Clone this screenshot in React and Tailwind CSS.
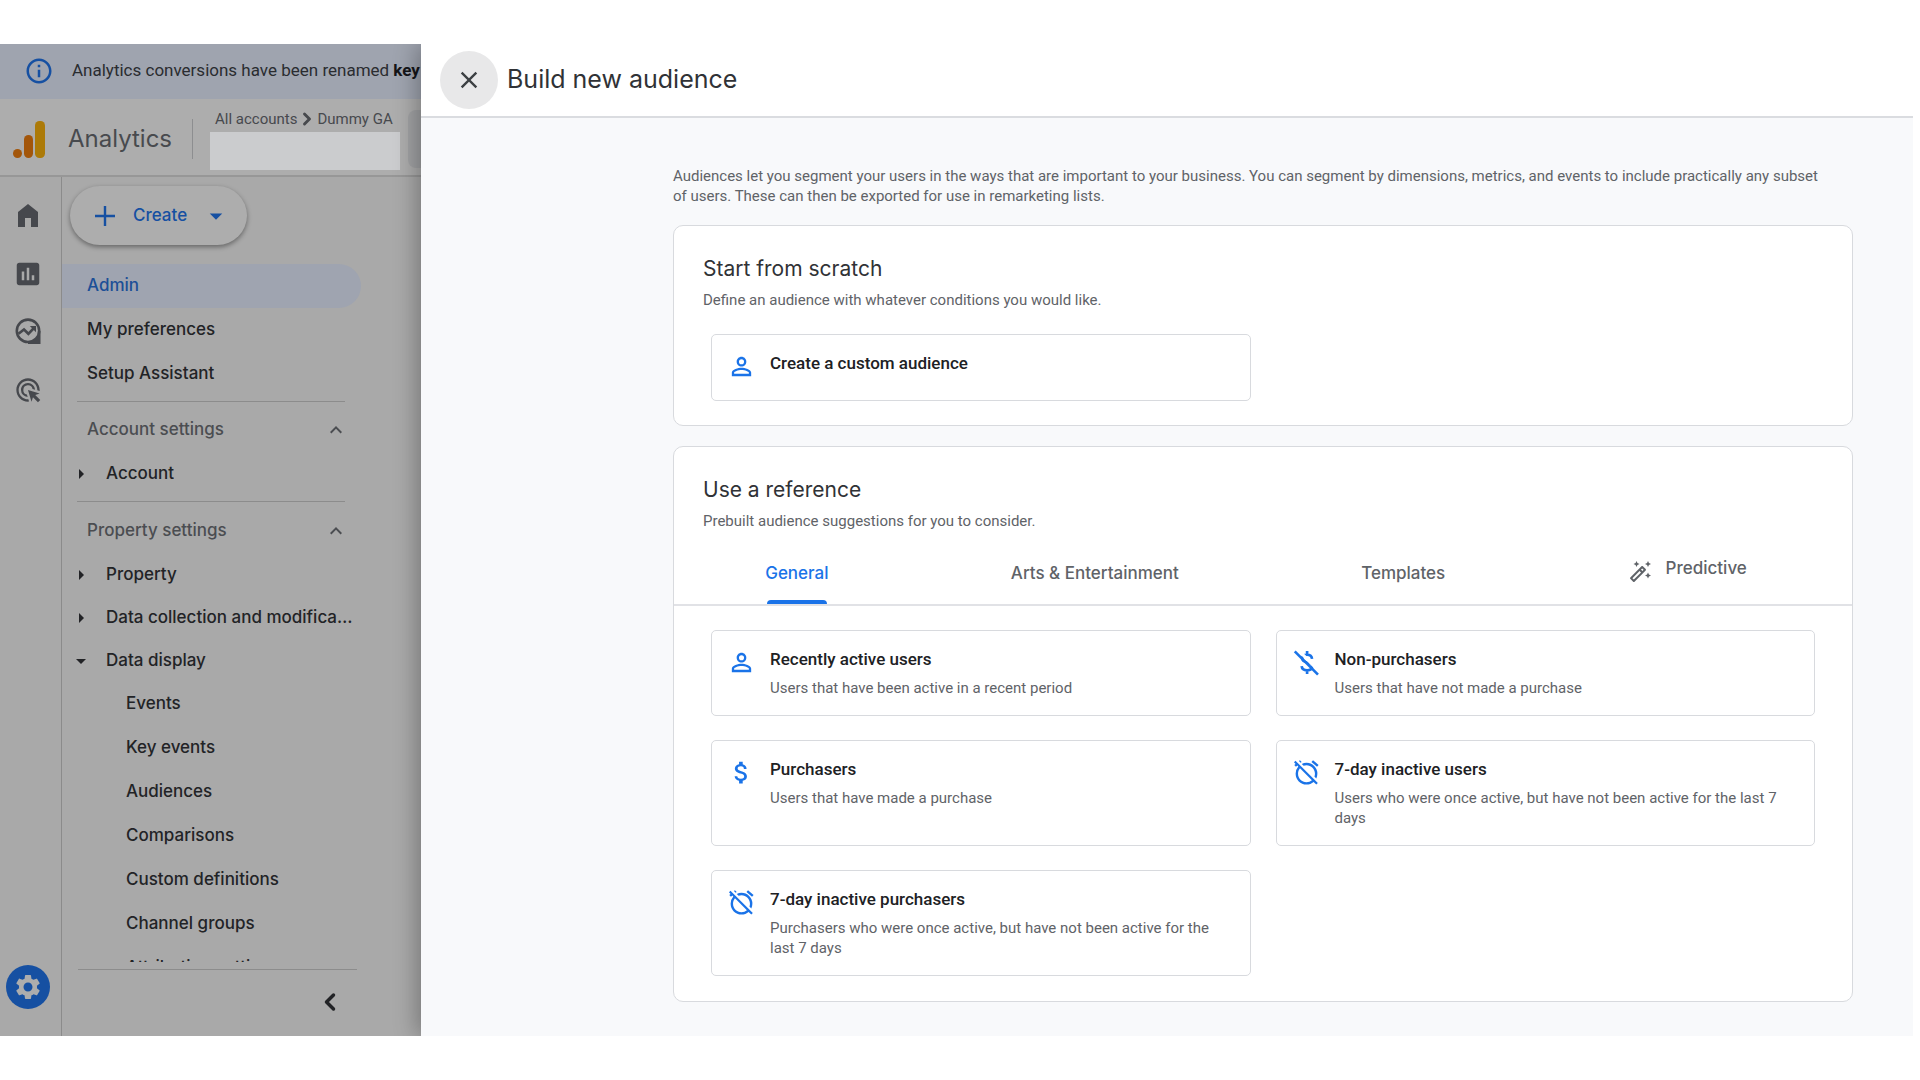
import React from 'react';
import { ChevronLeft, ChevronRight } from 'lucide-react';
import {
  MdAdsClick,
  MdAlarmOff,
  MdArrowDropDown,
  MdArrowRight,
  MdAttachMoney,
  MdClose,
  MdExpandLess,
  MdInfoOutline,
  MdOutlineAutoFixHigh,
  MdPersonOutline,
  MdPoll,
  MdSettings
} from 'react-icons/md';

const dataDisplayItems = [
  'Events',
  'Key events',
  'Audiences',
  'Comparisons',
  'Custom definitions',
  'Channel groups',
  'Attribution settings'
];

const tabs = [
  { label: 'General', active: true },
  { label: 'Arts & Entertainment' },
  { label: 'Templates' }
];

const references = [
  {
    title: 'Recently active users',
    text: 'Users that have been active in a recent period',
    icon: MdPersonOutline
  },
  { title: 'Non-purchasers', text: 'Users that have not made a purchase', icon: MoneyOffIcon },
  { title: 'Purchasers', text: 'Users that have made a purchase', icon: MdAttachMoney },
  {
    title: '7-day inactive users',
    text: 'Users who were once active, but have not been active for the last 7 days',
    icon: MdAlarmOff
  },
  {
    title: '7-day inactive purchasers',
    text: 'Purchasers who were once active, but have not been active for the last 7 days',
    icon: MdAlarmOff
  }
];

function AnalyticsLogo() {
  return (
    <svg aria-hidden="true" viewBox="0 0 32 37" className="h-[37px] w-8 shrink-0">
      <rect x="22" y="0" width="10" height="37" rx="4.5" fill="#ac7a08" />
      <rect x="11" y="14" width="9" height="23" rx="4.5" fill="#a3560a" />
      <circle cx="4.5" cy="32.5" r="4.5" fill="#a3560a" />
    </svg>
  );
}

function HomeIcon() {
  return (
    <svg aria-hidden="true" viewBox="0 0 20 23" fill="currentColor" className="h-[23px] w-5">
      <path d="M0 23V8L10 0l10 8v15h-7v-9H7v9z" />
    </svg>
  );
}

function ExploreIcon() {
  return (
    <svg
      aria-hidden="true"
      viewBox="0 0 26 26"
      fill="none"
      stroke="currentColor"
      strokeWidth="2.6"
      className="h-[26px] w-[26px]"
    >
      <circle cx="13" cy="12.8" r="11.2" />
      <path d="M24.2 13v11.6H13" />
      <path d="M24 18v6h-6z" fill="currentColor" stroke="none" />
      <path d="M3.5 15.8 9 11.5l4.4 4.3 6-6.3" />
      <path d="M14.8 8h6.2v6.2z" fill="currentColor" stroke="none" />
    </svg>
  );
}

function MoneyOffIcon({ className }) {
  return (
    <svg aria-hidden="true" viewBox="0 0 24 24" fill="none" stroke="currentColor" strokeWidth="2.2" className={className}>
      <path d="M12.5 2.5v3M12.5 18.5v3M16.6 9c-.2-2.2-1.8-3.4-4.1-3.4-2.4 0-4 1.2-4 3.100 0 2 1.700 2.700 4 3.300 2.400.6 4.300 1.300 4.300 3.400 0 1.900-1.700 3.100-4.300 3.100-2.700 0-4.300-1.300-4.500-3.500" />
      <path d="M4.600 1.200 23.600 20.400" stroke="#fff" strokeWidth="2.6" />
      <path d="M2.300 2.800 21.500 22" />
    </svg>
  );
}

function Header() {
  return (
    <>
      <div className="flex h-[55px] shrink-0 items-center overflow-hidden whitespace-nowrap bg-[#9fa4af] pb-[14px] pl-6 pt-3 font-[Roboto,sans-serif] text-[17px] text-[#2a2c30]">
        <MdInfoOutline className="mr-[18px] h-[30px] w-[30px] shrink-0 text-[#1650a2]" />
        <p>
          Analytics conversions have been renamed <b className="text-[#141518]">key events</b>
        </p>
      </div>
      <header className="flex h-[78px] shrink-0 items-center overflow-hidden border-b-2 border-[#979797] bg-[#adadad] pl-[13px] pt-1">
        <AnalyticsLogo />
        <span className="ml-[23px] w-[106px] shrink-0 text-[24px] text-[#484a4e]">Analytics</span>
        <div className="ml-[18px] h-10 w-px shrink-0 bg-[#8d8e90]" />
        <div className="ml-[17px] flex w-[190px] shrink-0 flex-col gap-[2px]">
          <div className="flex items-center whitespace-nowrap pl-[5px] font-[Roboto,sans-serif] text-[15px] leading-[22px] text-[#47494d]">
            <a href="#accounts">All accounts</a>
            <ChevronRight className="h-5 w-5" strokeWidth={3.5} />
            <a href="#dummy">Dummy GA</a>
          </div>
          <div className="h-[38px] bg-[#cbccce]" />
        </div>
        <div className="ml-2 h-[58px] w-16 shrink-0 rounded-lg bg-[#a1a2a4]" />
      </header>
    </>
  );
}

function Rail() {
  return (
    <nav className="flex w-[62px] shrink-0 flex-col items-center border-r border-[#8b8b8b] pb-[27px] pr-[5px] pt-[27px] text-[#46484d]" aria-label="Main">
      <a href="#home" aria-label="Home" className="flex h-[55px] items-start justify-center">
        <HomeIcon />
      </a>
      <a href="#reports" aria-label="Reports" className="h-[59px]">
        <MdPoll className="h-[30px] w-[30px]" />
      </a>
      <a href="#explore" aria-label="Explore" className="h-[58px]">
        <ExploreIcon />
      </a>
      <a href="#advertising" aria-label="Advertising">
        <MdAdsClick className="h-7 w-7" />
      </a>
      <a
        href="#admin"
        aria-label="Admin"
        className="mt-auto flex h-11 w-11 items-center justify-center rounded-full bg-[#1650a2] text-[#adadad]"
      >
        <MdSettings className="h-[30px] w-[30px]" />
      </a>
    </nav>
  );
}

function SectionHeading({ label }) {
  return (
    <button type="button" className="flex h-11 w-full shrink-0 items-center justify-between pl-[25px] pr-[67px] text-[#4b4d51]">
      {label}
      <MdExpandLess className="mr-[6px] h-6 w-6" />
    </button>
  );
}

function TreeItem({ label, open }) {
  const Arrow = open ? MdArrowDropDown : MdArrowRight;
  return (
    <button type="button" className="flex h-[43px] w-full shrink-0 items-center pl-[7px] pr-[64px] text-left">
      <Arrow className="mr-[13px] h-6 w-6 shrink-0" />
      <span className="truncate">{label}</span>
    </button>
  );
}

function Sidebar() {
  return (
    <div className="flex min-w-0 flex-1 flex-col text-[17px] font-medium text-[#222326]">
      <div className="shrink-0 pb-[19px] pl-2 pt-[9px]">
        <button
          type="button"
          className="flex h-[59px] w-[177px] items-center rounded-full bg-[#adadad] pl-[21px] text-[#1650a2] shadow-[0_2px_5px_rgba(0,0,0,0.4)]"
        >
          <svg aria-hidden="true" viewBox="0 0 28 28" stroke="currentColor" strokeWidth="2.4" className="mr-[14px] h-7 w-7">
            <path d="M4 14h20M14 4v20" />
          </svg>
          Create
          <MdArrowDropDown className="ml-[14px] h-[30px] w-[30px]" />
        </button>
      </div>
      <nav className="min-h-0 flex-1 overflow-hidden" aria-label="Admin">
        <a href="#admin" className="mr-[60px] flex h-11 items-center rounded-r-full bg-[#9fa4b0] pl-[25px] text-[#1c4f97]">
          Admin
        </a>
        <a href="#preferences" className="flex h-11 items-center pl-[25px]">
          My preferences
        </a>
        <a href="#setup" className="flex h-11 items-center pl-[25px]">
          Setup Assistant
        </a>
        <hr className="mb-[6px] ml-[15px] mr-[76px] mt-[5px] border-[#8c8c8c]" />
        <SectionHeading label="Account settings" />
        <TreeItem label="Account" />
        <hr className="mb-[7px] ml-[15px] mr-[76px] mt-[6px] border-[#8c8c8c]" />
        <SectionHeading label="Property settings" />
        <TreeItem label="Property" />
        <TreeItem label="Data collection and modification" />
        <TreeItem label="Data display" open />
        {dataDisplayItems.map((item) => (
          <a key={item} href="#display" className="flex h-11 items-center pl-16">
            {item}
          </a>
        ))}
      </nav>
      <div className="ml-4 mr-16 mt-[7px] flex h-[67px] shrink-0 items-start justify-end border-t border-[#8c8c8c] pr-[13px] pt-[18px]">
        <button type="button" aria-label="Collapse menu">
          <ChevronLeft className="h-7 w-7" strokeWidth={3} />
        </button>
      </div>
    </div>
  );
}

function OptionCard({ title, text, icon: Icon }) {
  return (
    <button
      type="button"
      className="flex min-h-[67px] items-start rounded-[5px] border border-[#d8dade] bg-white pb-[17px] pl-[15px] pr-5 pt-4 text-left font-[Roboto,sans-serif]"
    >
      <Icon className="mr-[14px] mt-px h-[29px] w-[29px] shrink-0 text-[#1a73e8]" />
      <span className="flex flex-col gap-[7px]">
        <span className="text-[17px] font-medium leading-6 text-[#202124]">{title}</span>
        {text && <span className="text-[15px] leading-5 text-[#5f6368]">{text}</span>}
      </span>
    </button>
  );
}

function ReferenceTabs() {
  return (
    <div role="tablist" className="mt-[10px] flex h-[65px] border-b-2 border-[#e1e2e6] text-[17px] font-medium text-[#5f6368]">
      {tabs.map((tab) => (
        <button
          key={tab.label}
          type="button"
          role="tab"
          aria-selected={Boolean(tab.active)}
          className={`flex flex-auto justify-center ${tab.active ? 'text-[#1a73e8]' : ''}`}
        >
          <span className="flex h-full flex-col items-center justify-between pt-5">
            <span className="leading-6">{tab.label}</span>
            {tab.active && <span className="h-1 w-[60px] rounded-t bg-[#1a73e8]" />}
          </span>
        </button>
      ))}
      <button type="button" role="tab" aria-selected="false" className="flex flex-auto items-start justify-center pt-[15px]">
        <MdOutlineAutoFixHigh className="mr-[14px] mt-1 h-6 w-6" />
        <span className="pr-[14px] leading-6">Predictive</span>
      </button>
    </div>
  );
}

function AudiencePanel() {
  return (
    <main className="z-10 flex min-w-0 flex-1 flex-col bg-[#f8f9fb] shadow-[-4px_0_22px_rgba(0,0,0,0.3)]">
      <div className="flex h-[74px] shrink-0 items-center border-b-2 border-[#dadce0] bg-white pl-[19px]">
        <button
          type="button"
          aria-label="Close"
          className="flex h-[58px] w-[58px] items-center justify-center rounded-full bg-[#e8e8e9] text-[#3c4043]"
        >
          <MdClose className="h-7 w-7" />
        </button>
        <h1 className="ml-[9px] text-[25px] text-[#303236]">Build new audience</h1>
      </div>

      <div className="pl-[252px] pr-[60px] pt-[48px]">
        <p className="pr-6 font-[Roboto,sans-serif] text-[15px] leading-5 text-[#5f6368]">
          Audiences let you segment your users in the ways that are important to your business. You can segment by
          dimensions, metrics, and events to include practically any subset of users. These can then be exported for use
          in remarketing lists.
        </p>

        <section className="mt-[19px] rounded-[10px] border border-[#d8dade] bg-white pb-6 pt-[27px]">
          <h2 className="px-[29px] text-[21px] leading-8 text-[#303236]">Start from scratch</h2>
          <p className="mt-[5px] px-[29px] font-[Roboto,sans-serif] text-[15px] leading-5 text-[#5f6368]">
            Define an audience with whatever conditions you would like.
          </p>
          <div className="mt-6 grid grid-cols-2 gap-[25px] px-[37px]">
            <OptionCard title="Create a custom audience" icon={MdPersonOutline} />
          </div>
        </section>

        <section className="mt-5 rounded-[10px] border border-[#d8dade] bg-white pb-[25px] pt-[27px]">
          <h2 className="px-[29px] text-[21px] leading-8 text-[#303236]">Use a reference</h2>
          <p className="mt-[5px] px-[29px] font-[Roboto,sans-serif] text-[15px] leading-5 text-[#5f6368]">
            Prebuilt audience suggestions for you to consider.
          </p>
          <ReferenceTabs />
          <div className="mt-6 grid grid-cols-2 gap-x-[25px] gap-y-6 px-[37px]">
            {references.map((item) => (
              <OptionCard key={item.title} {...item} />
            ))}
          </div>
        </section>
      </div>
    </main>
  );
}

export default function App() {
  return (
    <div className="h-screen bg-white py-11 pr-[7px] font-[Inter,sans-serif]">
      <div className="flex h-full overflow-hidden">
        <div className="flex w-[421px] shrink-0 flex-col bg-[#a9a9a9]">
          <Header />
          <div className="flex min-h-0 flex-1">
            <Rail />
            <Sidebar />
          </div>
        </div>
        <AudiencePanel />
      </div>
    </div>
  );
}
